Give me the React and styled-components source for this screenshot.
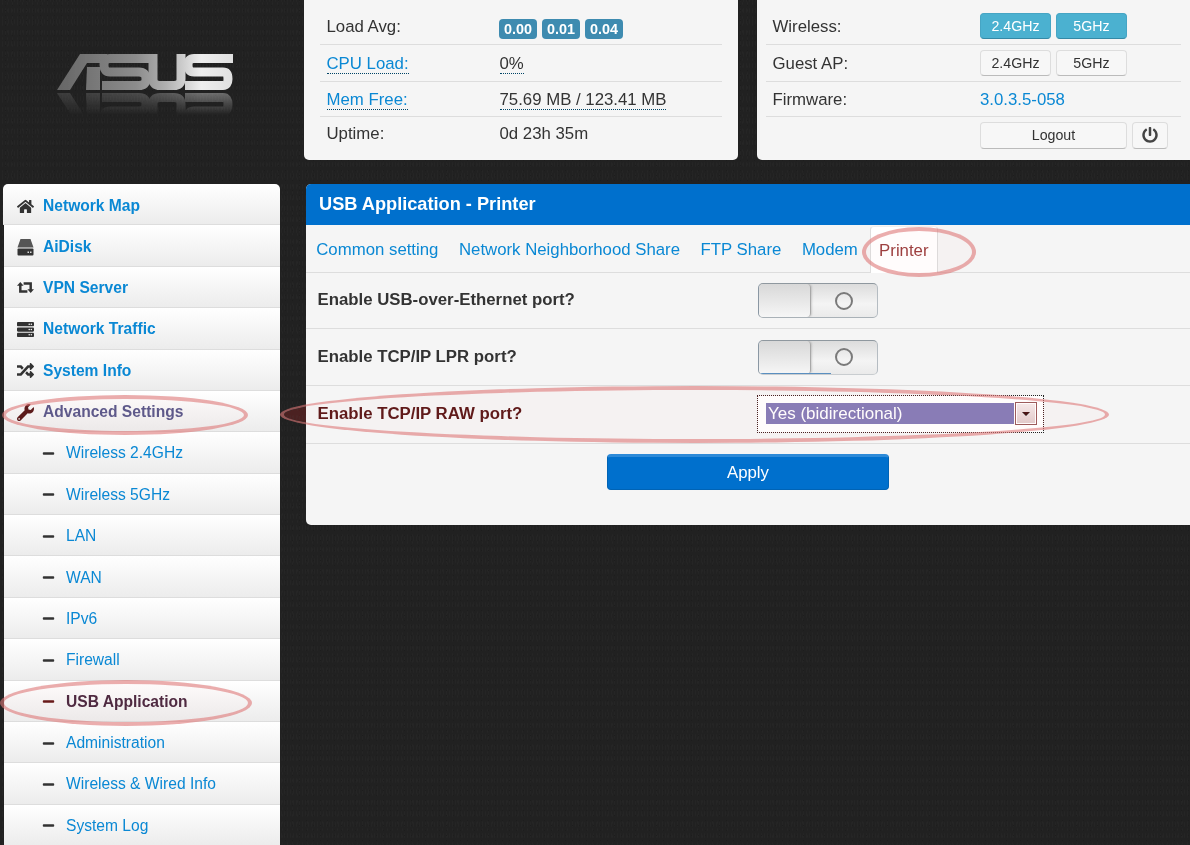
import React from 'react';
import styled, { createGlobalStyle } from 'styled-components';
import { FaHome, FaServer, FaRandom, FaWrench, FaMinus, FaPowerOff } from 'react-icons/fa';

const GlobalStyle = createGlobalStyle`
  html, body {
    margin: 0;
    padding: 0;
    background: #1f1f1f;
    font-family: "Liberation Sans", Arial, sans-serif;
    color: #333;
  }
`;

const Page = styled.div`
  position: relative;
  display: flex;
  width: 1190px;
  height: 845px;
  overflow: hidden;
  background-color: #212121;
  background-image:
    radial-gradient(#262626 0.6px, transparent 0.9px),
    radial-gradient(#1d1d1d 0.7px, transparent 1px),
    radial-gradient(#252525 0.5px, transparent 0.8px);
  background-size: 5px 7px, 7px 5px, 3px 11px;
  background-position: 0 0, 2px 3px, 1px 5px;
`;

const Side = styled.aside`
  flex: none;
  width: 277px;
  margin: 0 24px 0 3px;
`;

const LogoBox = styled.div`
  height: 184px;
  padding: 53px 0 0 54px;
  box-sizing: border-box;
`;

const Menu = styled.nav`
  border-radius: 5px 5px 0 0;
  overflow: hidden;
`;

const MenuRow = styled.div`
  display: flex;
  align-items: center;
  box-sizing: border-box;
  height: 41.38px;
  padding: ${(p) => (p.$first ? '4px 0 0 14px' : p.$sub ? '2px 0 0 38px' : '2px 0 0 13px')};
  border-bottom: 1px solid #ddd;
  margin-left: ${(p) => (p.$first ? '0' : '1px')};
  background: linear-gradient(#fff, #ececec);
  font-size: 15.6px;
  font-weight: ${(p) => (p.$bold ? 700 : 400)};
  color: ${(p) => p.$color || '#0a88d4'};
`;

const MenuIcon = styled.span`
  display: flex;
  justify-content: center;
  flex: none;
  width: ${(p) => (p.$sub ? '13px' : '17px')};
  margin-right: ${(p) => (p.$sub ? '11px' : '9px')};
  font-size: ${(p) => (p.$sub ? '13px' : '17px')};
  color: ${(p) => p.$color || '#333'};
`;

const Content = styled.main`
  flex: 1;
  min-width: 0;
`;

const StatsBar = styled.div`
  display: flex;
  justify-content: space-between;
  height: 160px;
  margin-bottom: 24px;
`;

const StatsCard = styled.section`
  box-sizing: border-box;
  width: ${(p) => p.$width};
  padding: ${(p) => (p.$wide ? '8px 9px 0' : '8px 16px 0')};
  background: #f5f5f5;
  border-radius: ${(p) => (p.$wide ? '0 0 0 5px' : '0 0 5px 5px')};
`;

const StatRow = styled.div`
  display: flex;
  align-items: center;
  box-sizing: border-box;
  height: ${(p) => p.$h};
  padding: ${(p) => (p.$last ? '0 0 2px 6.5px' : '2px 0 0 6.5px')};
  border-bottom: ${(p) => (p.$last ? 'none' : '1px solid #ddd')};
  font-size: 16.8px;
`;

const StatLabel = styled.span`
  flex: none;
  width: ${(p) => p.$w};
`;

const Dotted = styled.span`
  color: ${(p) => p.$color || '#333'};
  border-bottom: 1px dotted #046;
  line-height: 18px;
`;

const LinkText = styled.span`
  color: #0a88d4;
`;

const Badges = styled.div`
  display: flex;
  gap: 5px;
  margin: 4px 0 0 -0.5px;
`;

const Badge = styled.span`
  width: 38px;
  height: 20px;
  line-height: 20px;
  text-align: center;
  border-radius: 4px;
  background: #3e8bb0;
  color: #fff;
  font-size: 14.4px;
  font-weight: 700;
`;

const BtnGroup = styled.div`
  display: flex;
  gap: 5px;
  margin-top: ${(p) => (p.$bare ? '0' : '-2px')};
`;

const SmallBtn = styled.div`
  display: flex;
  align-items: center;
  justify-content: center;
  box-sizing: border-box;
  width: ${(p) => p.$w || '71px'};
  height: ${(p) => p.$h || '26px'};
  border-radius: 4px;
  border: 1px solid ${(p) => (p.$on ? '#46a5c4' : '#ddd')};
  border-bottom-color: ${(p) => (p.$on ? '#3489a6' : '#bbb')};
  background: ${(p) => (p.$on ? '#4bb1d0' : '#f7f7f7')};
  color: ${(p) => (p.$on ? '#fff' : '#333')};
  font-size: 14.2px;
`;

const MainPanel = styled.section`
  height: 341px;
  margin-left: 2px;
  background: #f5f5f5;
  border-radius: 5px 0 0 5px;
  overflow: hidden;
`;

const PanelTitle = styled.h1`
  box-sizing: border-box;
  height: 41px;
  margin: 0;
  padding: 0 0 1px 13px;
  display: flex;
  align-items: center;
  background: #0070cd;
  color: #fff;
  font-size: 18.2px;
  font-weight: 700;
`;

const Tabs = styled.div`
  display: flex;
  align-items: stretch;
  box-sizing: border-box;
  height: 48px;
  padding: 1px 0 0;
  border-bottom: 1px solid #ddd;
`;

const Tab = styled.div`
  display: flex;
  align-items: center;
  box-sizing: border-box;
  height: ${(p) => (p.$active ? '47px' : 'auto')};
  padding: 1px ${(p) => (p.$active ? '8px' : '10.25px')} 0;
  margin-left: ${(p) => (p.$active ? '2px' : '0')};
  font-size: 16.8px;
  color: ${(p) => (p.$active ? '#9c3f3f' : '#0a88d4')};
  background: ${(p) => (p.$active ? '#fff' : 'transparent')};
  border: ${(p) => (p.$active ? '1px solid #ddd' : 'none')};
  border-bottom: none;
  border-top-color: #eee;
  border-radius: ${(p) => (p.$active ? '4px 4px 0 0' : '0')};
`;

const SettingRow = styled.div`
  display: flex;
  align-items: center;
  box-sizing: border-box;
  height: ${(p) => p.$h};
  padding: 0 0 ${(p) => p.$pb || '2px'} 11.5px;
  border-bottom: 1px solid #ddd;
`;

const SettingLabel = styled.label`
  flex: none;
  width: 440px;
  font-size: 16.8px;
  font-weight: 700;
  color: ${(p) => p.$color || '#333'};
`;

const Toggle = styled.div`
  position: relative;
  display: flex;
  box-sizing: border-box;
  width: 120px;
  height: 35px;
  margin: ${(p) => (p.$accent ? '0' : '2px')} 0 0 0.5px;
  border: 1px solid #b5bcc2;
  border-left-color: #8a97a3;
  border-top-color: #8f989f;
  border-bottom-color: ${(p) => (p.$accent ? '#c9cdd0' : '#a9b1b7')};
  border-radius: 5px;
  background: linear-gradient(#dcdcdc, #f4f4f4 60%, #eaeaea);
  overflow: hidden;
`;

const ToggleAccent = styled.span`
  position: absolute;
  left: 0;
  bottom: 0;
  width: 72px;
  height: 1px;
  background: #5a8fc0;
`;

const ToggleKnob = styled.div`
  flex: none;
  box-sizing: border-box;
  width: 52px;
  border-right: 1px solid #a8a8a8;
  border-radius: 4px;
  background: linear-gradient(#d8d8d8, #f6f6f6);
  box-shadow: 1px 0 2px rgba(0, 0, 0, 0.15);
`;

const ToggleFace = styled.div`
  flex: 1;
  display: flex;
  align-items: center;
  justify-content: center;
`;

const ToggleDot = styled.span`
  box-sizing: border-box;
  width: 18px;
  height: 18px;
  border: 2.5px solid #7a7a7a;
  border-radius: 50%;
`;

const SelectFocus = styled.div`
  box-sizing: border-box;
  width: 287px;
  height: 38px;
  margin-left: -0.5px;
  padding: 1px;
  outline: 1px dotted #222;
  outline-offset: -1px;
`;

const SelectBox = styled.div`
  display: flex;
  align-items: center;
  box-sizing: border-box;
  height: 100%;
  padding: 0 6px 0 8px;
  background: #fff;
  border-radius: 3px;
`;

const SelectValue = styled.div`
  flex: 1;
  height: 21px;
  padding-left: 2px;
  line-height: 22px;
  background: #887db8;
  color: #fff;
  font-size: 17px;
`;

const SelectArrow = styled.div`
  display: flex;
  align-items: center;
  justify-content: center;
  box-sizing: border-box;
  width: 22px;
  height: 23px;
  margin-left: 1px;
  border: 1px solid #9c5c5c;
  box-shadow: inset 0 0 0 1px #fff;
  background: linear-gradient(#f6ecec, #e2cccc);
`;

const ArrowTip = styled.span`
  width: 0;
  height: 0;
  border-left: 4px solid transparent;
  border-right: 4px solid transparent;
  border-top: 4px solid #111;
`;

const ApplyRow = styled.div`
  display: flex;
  justify-content: center;
  padding-top: 10px;
`;

const ApplyButton = styled.div`
  display: flex;
  align-items: center;
  justify-content: center;
  box-sizing: border-box;
  width: 282px;
  height: 36px;
  padding-bottom: 1px;
  border-radius: 4px;
  border: 1px solid #0063b5;
  border-top: 3px solid #2d8ad8;
  background: #0070cd;
  color: #fff;
  font-size: 16.8px;
`;

// the red rings somebody drew over the screenshot
const Ring = styled.div`
  position: absolute;
  left: ${(p) => p.$x}px;
  top: ${(p) => p.$y}px;
  width: ${(p) => p.$w}px;
  height: ${(p) => p.$h}px;
  box-sizing: border-box;
  border: 4px solid rgba(222, 120, 120, 0.6);
  border-radius: 50%;
  background: rgba(255, 40, 40, 0.015);
  &::before {
    content: '';
    position: absolute;
    inset: 0;
    border-radius: 50%;
    background: #4b1515;
    mix-blend-mode: lighten;
  }
`;

const AsusLogo = () => (
  <svg width="176" height="62" viewBox="0 0 176 62" style={{ display: 'block' }}>
    <defs>
      <linearGradient id="metal" gradientUnits="userSpaceOnUse" x1="0" y1="0" x2="176" y2="0">
        <stop offset="0" stopColor="#666" />
        <stop offset="0.45" stopColor="#8c8c8c" />
        <stop offset="0.62" stopColor="#b0b0b0" />
        <stop offset="0.82" stopColor="#eee" />
        <stop offset="1" stopColor="#e0e0e0" />
      </linearGradient>
      <linearGradient id="fade" x1="0" y1="0" x2="0" y2="1">
        <stop offset="0" stopColor="#fff" stopOpacity="0.4" />
        <stop offset="1" stopColor="#fff" stopOpacity="0" />
      </linearGradient>
      <mask id="fadeMask">
        <rect x="0" y="39" width="176" height="23" fill="url(#fade)" />
      </mask>
      <filter id="soft" x="-5%" y="-5%" width="110%" height="110%">
        <feGaussianBlur stdDeviation="0.4" />
      </filter>
      <g id="asusMark">
        <polygon points="0,37 23,1 50,1 50,10 30,10 13,37" fill="url(#metal)" />
        <polygon points="30,14 43,14 43,37 29,37" fill="url(#metal)" />
        <path d="M92,5.5 H53 Q47,5.5 47,12 Q47,19 53,19 H82 Q89,19 89,26 Q89,32.5 82,32.5 H45" fill="none" stroke="url(#metal)" strokeWidth="9" />
        <path d="M96,1 V26 Q96,32.5 103,32.5 H117 Q124,32.5 124,26 V1" fill="none" stroke="url(#metal)" strokeWidth="9" />
        <path d="M176,5.5 H137 Q131,5.5 131,12 Q131,19 137,19 H166 Q171,19 171,26 Q171,32.5 166,32.5 H128" fill="none" stroke="url(#metal)" strokeWidth="9" />
      </g>
    </defs>
    <g filter="url(#soft)">
      <use href="#asusMark" />
      <g mask="url(#fadeMask)">
        <use href="#asusMark" transform="translate(0 77) scale(1 -1)" />
      </g>
    </g>
  </svg>
);

const DiskIcon = () => (
  <svg width="17" height="18" viewBox="0 0 17 18">
    <path d="M3.5 1 H13.5 L16.5 9.5 H0.5 Z" fill="#555" />
    <rect x="0.5" y="10.5" width="16" height="7" rx="1" fill="#333" />
    <rect x="10.5" y="13.5" width="1.5" height="1.5" fill="#ddd" />
    <rect x="13" y="13.5" width="1.5" height="1.5" fill="#ddd" />
  </svg>
);

const LoopIcon = () => (
  <svg width="17" height="13" viewBox="0 0 18 13.5">
    <path d="M3.5 4 V11 H11" fill="none" stroke="#333" strokeWidth="2.6" />
    <polygon points="0,5 3.5,1 7,5" fill="#333" />
    <path d="M14.5 9.5 V2.5 H7" fill="none" stroke="#333" strokeWidth="2.6" />
    <polygon points="11,8.5 14.5,12.5 18,8.5" fill="#333" />
  </svg>
);

const menu = [
  { label: 'Network Map', icon: <FaHome /> },
  { label: 'AiDisk', icon: <DiskIcon /> },
  { label: 'VPN Server', icon: <LoopIcon /> },
  { label: 'Network Traffic', icon: <FaServer /> },
  { label: 'System Info', icon: <FaRandom /> },
  { label: 'Advanced Settings', icon: <FaWrench />, color: '#5c5a8c', iconColor: '#5a1a1a' },
  { label: 'Wireless 2.4GHz', sub: true },
  { label: 'Wireless 5GHz', sub: true },
  { label: 'LAN', sub: true },
  { label: 'WAN', sub: true },
  { label: 'IPv6', sub: true },
  { label: 'Firewall', sub: true },
  { label: 'USB Application', sub: true, bold: true, color: '#4d2a42', iconColor: '#661a1a' },
  { label: 'Administration', sub: true },
  { label: 'Wireless & Wired Info', sub: true },
  { label: 'System Log', sub: true },
];

const tabs = ['Common setting', 'Network Neighborhood Share', 'FTP Share', 'Modem'];

export default function App() {
  return (
    <Page>
      <GlobalStyle />
      <Side>
        <LogoBox>
          <AsusLogo />
        </LogoBox>
        <Menu>
          {menu.map((item, i) => (
            <MenuRow
              key={item.label}
              $sub={item.sub}
              $bold={!item.sub || item.bold}
              $color={item.color}
              $first={i === 0}
            >
              <MenuIcon $sub={item.sub} $color={item.iconColor}>
                {item.icon || <FaMinus />}
              </MenuIcon>
              {item.label}
            </MenuRow>
          ))}
        </Menu>
      </Side>

      <Content>
        <StatsBar>
          <StatsCard $width="434px">
            <StatRow $h="37px">
              <StatLabel $w="173px">Load Avg:</StatLabel>
              <Badges>
                <Badge>0.00</Badge>
                <Badge>0.01</Badge>
                <Badge>0.04</Badge>
              </Badges>
            </StatRow>
            <StatRow $h="37px">
              <StatLabel $w="173px">
                <Dotted $color="#0a88d4">CPU Load:</Dotted>
              </StatLabel>
              <Dotted>0%</Dotted>
            </StatRow>
            <StatRow $h="35px">
              <StatLabel $w="173px">
                <Dotted $color="#0a88d4">Mem Free:</Dotted>
              </StatLabel>
              <Dotted>75.69 MB / 123.41 MB</Dotted>
            </StatRow>
            <StatRow $h="36px" $last>
              <StatLabel $w="173px">Uptime:</StatLabel>
              0d 23h 35m
            </StatRow>
          </StatsCard>

          <StatsCard $width="433px" $wide>
            <StatRow $h="37px">
              <StatLabel $w="207.5px">Wireless:</StatLabel>
              <BtnGroup>
                <SmallBtn $on>2.4GHz</SmallBtn>
                <SmallBtn $on>5GHz</SmallBtn>
              </BtnGroup>
            </StatRow>
            <StatRow $h="37px">
              <StatLabel $w="207.5px">Guest AP:</StatLabel>
              <BtnGroup>
                <SmallBtn>2.4GHz</SmallBtn>
                <SmallBtn>5GHz</SmallBtn>
              </BtnGroup>
            </StatRow>
            <StatRow $h="35px">
              <StatLabel $w="207.5px">Firmware:</StatLabel>
              <LinkText>3.0.3.5-058</LinkText>
            </StatRow>
            <StatRow $h="38px" $last>
              <StatLabel $w="207.5px" />
              <BtnGroup $bare>
                <SmallBtn $w="147px" $h="27px">Logout</SmallBtn>
                <SmallBtn $w="36px" $h="27px">
                  <FaPowerOff size={16} color="#444" />
                </SmallBtn>
              </BtnGroup>
            </StatRow>
          </StatsCard>
        </StatsBar>

        <MainPanel>
          <PanelTitle>USB Application - Printer</PanelTitle>
          <Tabs>
            {tabs.map((t) => (
              <Tab key={t}>{t}</Tab>
            ))}
            <Tab $active>Printer</Tab>
          </Tabs>
          <SettingRow $h="56px">
            <SettingLabel>Enable USB-over-Ethernet port?</SettingLabel>
            <Toggle>
              <ToggleKnob />
              <ToggleFace>
                <ToggleDot />
              </ToggleFace>
            </Toggle>
          </SettingRow>
          <SettingRow $h="57px" $pb="0">
            <SettingLabel>Enable TCP/IP LPR port?</SettingLabel>
            <Toggle $accent>
              <ToggleKnob />
              <ToggleFace>
                <ToggleDot />
              </ToggleFace>
              <ToggleAccent />
            </Toggle>
          </SettingRow>
          <SettingRow $h="58px">
            <SettingLabel $color="#5e1a1a">Enable TCP/IP RAW port?</SettingLabel>
            <SelectFocus>
              <SelectBox>
                <SelectValue>Yes (bidirectional)</SelectValue>
                <SelectArrow>
                  <ArrowTip />
                </SelectArrow>
              </SelectBox>
            </SelectFocus>
          </SettingRow>
          <ApplyRow>
            <ApplyButton>Apply</ApplyButton>
          </ApplyRow>
        </MainPanel>
      </Content>

      <Ring $x={2} $y={395} $w={246} $h={40} />
      <Ring $x={0} $y={680} $w={252} $h={46} />
      <Ring $x={862} $y={227} $w={114} $h={50} />
      <Ring $x={280} $y={386} $w={829} $h={57} />
    </Page>
  );
}
